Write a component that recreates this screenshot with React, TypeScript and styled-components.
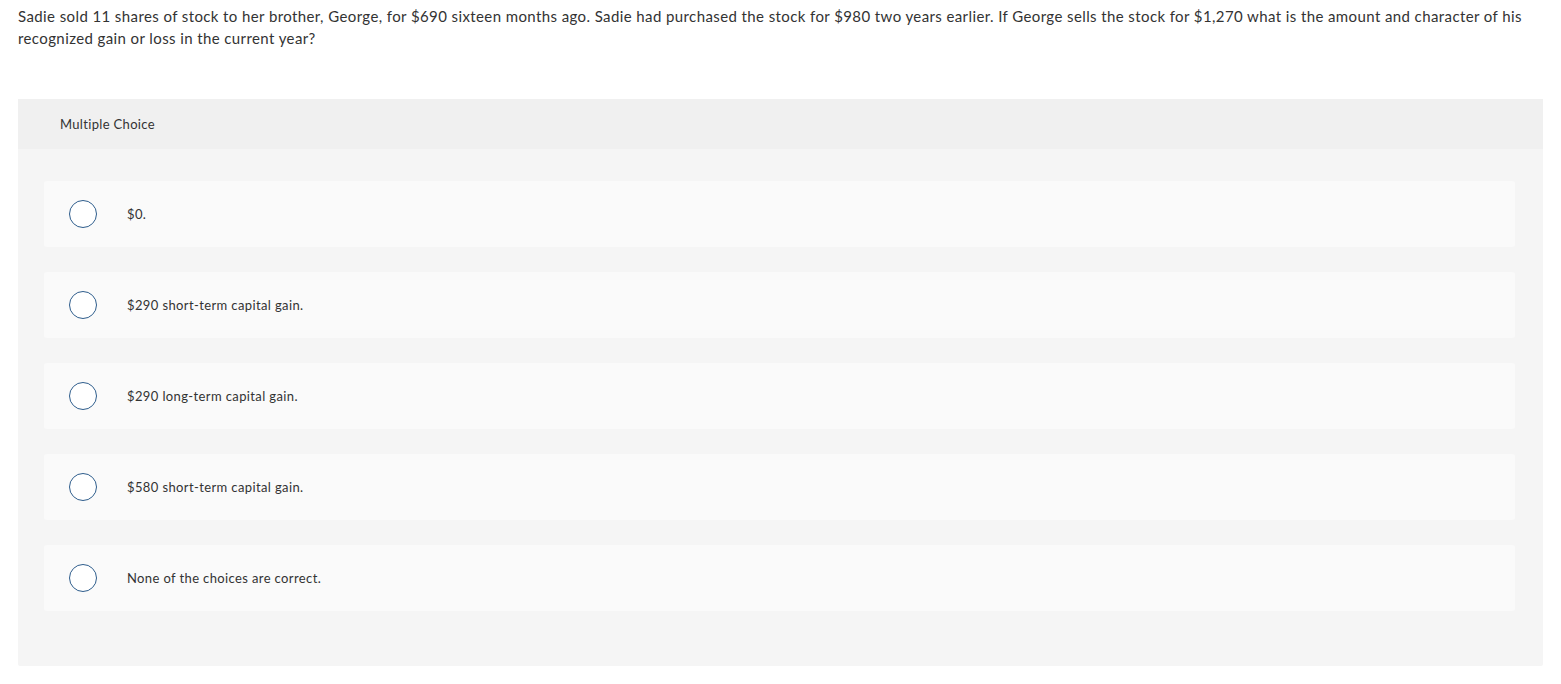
import React from "react";
import styled, { createGlobalStyle } from "styled-components";

const Global = createGlobalStyle`
  html, body { margin: 0; padding: 0; background: #fff; }
  body { font-family: Lato, "Open Sans", sans-serif; color: #333; }
`;

const Page = styled.div`
  padding: 5px 18px 18px 18px;
`;

const Question = styled.p`
  margin: 0 0 50px 0;
  font-size: 15px;
  line-height: 22px;
  letter-spacing: 0.4px;
  color: #333;
`;

const Panel = styled.section`
  background: #f5f5f5;
  border-radius: 2px;
`;

const Header = styled.div`
  height: 50px;
  background: #f0f0f0;
  display: flex;
  align-items: center;
  padding-left: 42px;
  font-size: 13px;
  letter-spacing: 0.33px;
  color: #333;
`;

const Options = styled.div`
  display: flex;
  flex-direction: column;
  gap: 25px;
  padding: 32px 28px 55px 26px;
`;

const Option = styled.label`
  display: flex;
  align-items: center;
  height: 66px;
  background: #fafafa;
  border-radius: 3px;
  padding-left: 25px;
  font-size: 13px;
  letter-spacing: 0.38px;
  color: #333;
`;

const Radio = styled.span`
  width: 28px;
  height: 28px;
  box-sizing: border-box;
  border: 1.5px solid #2e5d8c;
  border-radius: 50%;
  background: #fff;
  flex-shrink: 0;
  margin-right: 30px;
`;

const choices = [
  "$0.",
  "$290 short-term capital gain.",
  "$290 long-term capital gain.",
  "$580 short-term capital gain.",
  "None of the choices are correct.",
];

export default function App() {
  return (
    <>
      <Global />
      <Page>
        <Question>
          Sadie sold 11 shares of stock to her brother, George, for $690 sixteen months ago. Sadie had purchased the stock for $980 two years earlier. If George sells the stock for $1,270 what is the amount and character of his recognized gain or loss in the current year?
        </Question>
        <Panel>
          <Header>Multiple Choice</Header>
          <Options>
            {choices.map((c) => (
              <Option key={c}>
                <Radio />
                <span>{c}</span>
              </Option>
            ))}
          </Options>
        </Panel>
      </Page>
    </>
  );
}
